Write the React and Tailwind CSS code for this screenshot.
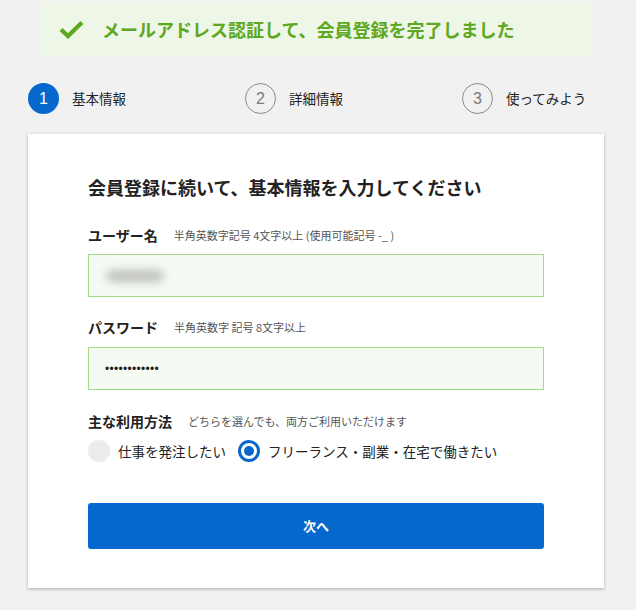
import React from "react";

const FONT = { fontFamily: '"Noto Sans CJK JP", "Noto Sans", sans-serif' };

const STEPS = [
  { no: "1", label: "基本情報", active: true },
  { no: "2", label: "詳細情報", active: false },
  { no: "3", label: "使ってみよう", active: false },
];

function Step({ no, label, active }) {
  return (
    <div className="flex w-[217px] shrink-0 items-center gap-[13px]">
      <div
        className={
          active
            ? "flex h-[31px] w-[31px] shrink-0 items-center justify-center rounded-full bg-[#0668cc] text-[16px] text-white"
            : "flex h-[31px] w-[31px] shrink-0 items-center justify-center rounded-full border border-[#8c8c8c] text-[16px] text-[#7a7a7a]"
        }
        style={{ fontFamily: '"Liberation Sans", sans-serif' }}
      >
        {no}
      </div>
      <span className="text-[13.5px] text-[#222]">{label}</span>
    </div>
  );
}

function FieldLabel({ title, hint }) {
  return (
    <div className="flex h-[20px] items-center gap-[16px]">
      <span className="text-[14px] font-bold text-[#222]">{title}</span>
      <span className="text-[11px] text-[#555]">{hint}</span>
    </div>
  );
}

export default function App() {
  return (
    <div className="min-h-[610px] w-full overflow-hidden bg-[#f1f1f1]" style={FONT}>
      <div className="pt-[2px]">
        <div className="ml-[40px] flex h-[55px] w-[552px] items-center rounded-[4px] bg-[#eef6e7] pl-[19px]">
          <svg width="25" height="19" viewBox="0 0 25 19" className="shrink-0">
            <path d="M2 9.5 L9 16 L23 2.5" fill="none" stroke="#5ca81e" strokeWidth="4.2" />
          </svg>
          <span className="ml-[18px] text-[18px] font-bold text-[#5ca81e]">
            メールアドレス認証して、会員登録を完了しました
          </span>
        </div>
      </div>

      <div className="ml-[28px] mt-[26px] flex h-[31px] items-center">
        {STEPS.map((s) => (
          <Step key={s.no} {...s} />
        ))}
      </div>

      <div className="ml-[28px] mr-[32px] mt-[20px] bg-white px-[60px] pb-[39px] pt-[40px] shadow-[0_1px_3px_rgba(0,0,0,0.3)]">
        <h1 className="text-[18px] font-bold leading-[26px] text-[#222]">
          会員登録に続いて、基本情報を入力してください
        </h1>

        <div className="mt-[25px]">
          <FieldLabel title="ユーザー名" hint="半角英数字記号 4文字以上 (使用可能記号 -_ )" />
        </div>
        <div className="mt-[9px] flex h-[43px] items-center border border-[#a3db85] bg-[#f5faf2] pl-[17px]">
          <div className="h-[12px] w-[58px] rounded-full bg-[#bfc3bc] blur-[4px]" />
        </div>

        <div className="mt-[20px]">
          <FieldLabel title="パスワード" hint="半角英数字 記号 8文字以上" />
        </div>
        <div className="mt-[10px] flex h-[43px] items-center border border-[#a3db85] bg-[#f5faf2] pl-[16px]">
          <span
            className="text-[12px] tracking-[0.3px] text-[#222]"
            style={{ fontFamily: '"Liberation Sans", sans-serif' }}
          >
            ••••••••••••
          </span>
        </div>

        <div className="mt-[21px]">
          <FieldLabel title="主な利用方法" hint="どちらを選んでも、両方ご利用いただけます" />
        </div>
        <div className="mt-[9px] flex h-[22px] items-center">
          <div className="h-[22px] w-[22px] rounded-full bg-[#ececec]" />
          <span className="ml-[8px] text-[13.5px] text-[#222]">仕事を発注したい</span>
          <div className="ml-[12px] flex h-[22px] w-[22px] items-center justify-center rounded-full border-[3px] border-[#0668cc]">
            <div className="h-[10px] w-[10px] rounded-full bg-[#0668cc]" />
          </div>
          <span className="ml-[8px] text-[13.5px] text-[#222]">
            フリーランス・副業・在宅で働きたい
          </span>
        </div>

        <button className="mt-[41px] flex h-[46px] w-full items-center justify-center rounded-[3px] bg-[#0468cc] text-[13px] font-bold text-white">
          次へ
        </button>
      </div>
    </div>
  );
}
